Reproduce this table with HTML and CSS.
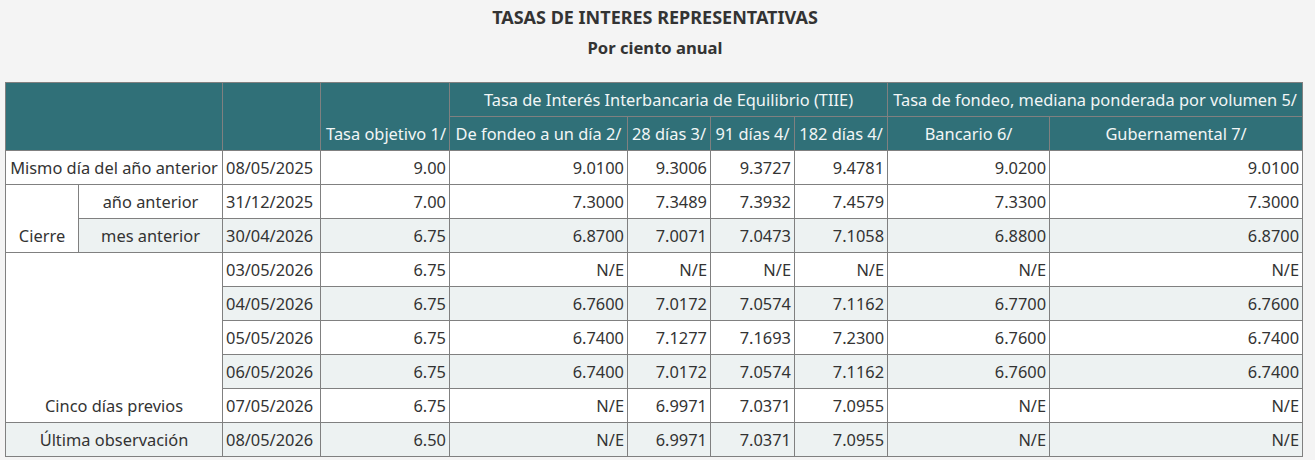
FILE: index.html
```html
<!DOCTYPE html>
<html lang="es">
<head>
<meta charset="utf-8">
<title>Tasas de interes representativas</title>
<link rel="stylesheet" href="styles.css">
</head>
<body>
<div class="page">
  <h1 class="title">TASAS DE INTERES REPRESENTATIVAS</h1>
  <h2 class="subtitle">Por ciento anual</h2>
  <table class="rates">
    <colgroup>
      <col class="c1"><col class="c2"><col class="c3"><col class="c4"><col class="c5">
      <col class="c6"><col class="c7"><col class="c8"><col class="c9"><col class="c10">
    </colgroup>
    <thead>
      <tr>
        <th colspan="2" rowspan="2"></th>
        <th rowspan="2"></th>
        <th rowspan="2" class="bottom">Tasa objetivo 1/</th>
        <th colspan="4">Tasa de Interés Interbancaria de Equilibrio (TIIE)</th>
        <th colspan="2">Tasa de fondeo, mediana ponderada por volumen 5/</th>
      </tr>
      <tr>
        <th>De fondeo a un día 2/</th>
        <th>28 días 3/</th>
        <th>91 días 4/</th>
        <th>182 días 4/</th>
        <th>Bancario 6/</th>
        <th>Gubernamental 7/</th>
      </tr>
    </thead>
    <tbody>
      <tr>
        <td colspan="2" class="lbl">Mismo día del año anterior</td>
        <td class="date">08/05/2025</td>
        <td>9.00</td><td>9.0100</td><td>9.3006</td><td>9.3727</td><td>9.4781</td><td>9.0200</td><td>9.0100</td>
      </tr>
      <tr>
        <td rowspan="2" class="lbl bottom">Cierre</td>
        <td class="lbl">año anterior</td>
        <td class="date">31/12/2025</td>
        <td>7.00</td><td>7.3000</td><td>7.3489</td><td>7.3932</td><td>7.4579</td><td>7.3300</td><td>7.3000</td>
      </tr>
      <tr class="alt">
        <td class="lbl">mes anterior</td>
        <td class="date">30/04/2026</td>
        <td>6.75</td><td>6.8700</td><td>7.0071</td><td>7.0473</td><td>7.1058</td><td>6.8800</td><td>6.8700</td>
      </tr>
      <tr>
        <td colspan="2" rowspan="5" class="lbl bottom">Cinco días previos</td>
        <td class="date">03/05/2026</td>
        <td>6.75</td><td>N/E</td><td>N/E</td><td>N/E</td><td>N/E</td><td>N/E</td><td>N/E</td>
      </tr>
      <tr class="alt">
        <td class="date">04/05/2026</td>
        <td>6.75</td><td>6.7600</td><td>7.0172</td><td>7.0574</td><td>7.1162</td><td>6.7700</td><td>6.7600</td>
      </tr>
      <tr>
        <td class="date">05/05/2026</td>
        <td>6.75</td><td>6.7400</td><td>7.1277</td><td>7.1693</td><td>7.2300</td><td>6.7600</td><td>6.7400</td>
      </tr>
      <tr class="alt">
        <td class="date">06/05/2026</td>
        <td>6.75</td><td>6.7400</td><td>7.0172</td><td>7.0574</td><td>7.1162</td><td>6.7600</td><td>6.7400</td>
      </tr>
      <tr>
        <td class="date">07/05/2026</td>
        <td>6.75</td><td>N/E</td><td>6.9971</td><td>7.0371</td><td>7.0955</td><td>N/E</td><td>N/E</td>
      </tr>
      <tr class="alt">
        <td colspan="2" class="lbl">Última observación</td>
        <td class="date">08/05/2026</td>
        <td>6.50</td><td>N/E</td><td>6.9971</td><td>7.0371</td><td>7.0955</td><td>N/E</td><td>N/E</td>
      </tr>
    </tbody>
  </table>
</div>
</body>
</html>
```
FILE: styles.css
```css
html, body {
  margin: 0;
  padding: 0;
  background: #f4f4f4;
}
body {
  font-family: "Noto Sans", "Open Sans", sans-serif;
  color: #333333;
}
.page {
  padding: 5px 0 0 5px;
}
.title {
  margin: 0;
  width: 1300px;
  text-align: center;
  font-size: 18px;
  line-height: 24px;
  font-weight: bold;
  color: #333;
}
.subtitle {
  margin: 7px 0 0;
  width: 1300px;
  text-align: center;
  font-size: 16.6px;
  line-height: 24px;
  font-weight: bold;
  color: #333;
}
.rates {
  margin-top: 22px;
  border-collapse: collapse;
  table-layout: fixed;
  width: 1298px;
  font-size: 16.4px;
}
.c1 { width: 73px; }
.c2 { width: 144px; }
.c3 { width: 98px; }
.c4 { width: 129px; }
.c5 { width: 178px; }
.c6 { width: 83px; }
.c7 { width: 84px; }
.c8 { width: 93px; }
.c9 { width: 162px; }
.c10 { width: 253px; }
.rates th, .rates td {
  border: 1px solid #808080;
  padding: 4px 3px;
  height: 25px;
  line-height: 25px;
  white-space: nowrap;
  overflow: hidden;
}
.rates th {
  background: #307078;
  color: #f2f6f6;
  font-weight: normal;
  text-align: center;
}
.rates th.bottom {
  vertical-align: bottom;
  text-align: right;
}
.rates td {
  background: #ffffff;
  text-align: right;
}
.rates tr.alt td {
  background: #edf2f2;
}
.rates td.lbl {
  text-align: center;
}
.rates td.date {
  text-align: left;
}
.rates td.bottom {
  vertical-align: bottom;
  background: #ffffff;
}
```
